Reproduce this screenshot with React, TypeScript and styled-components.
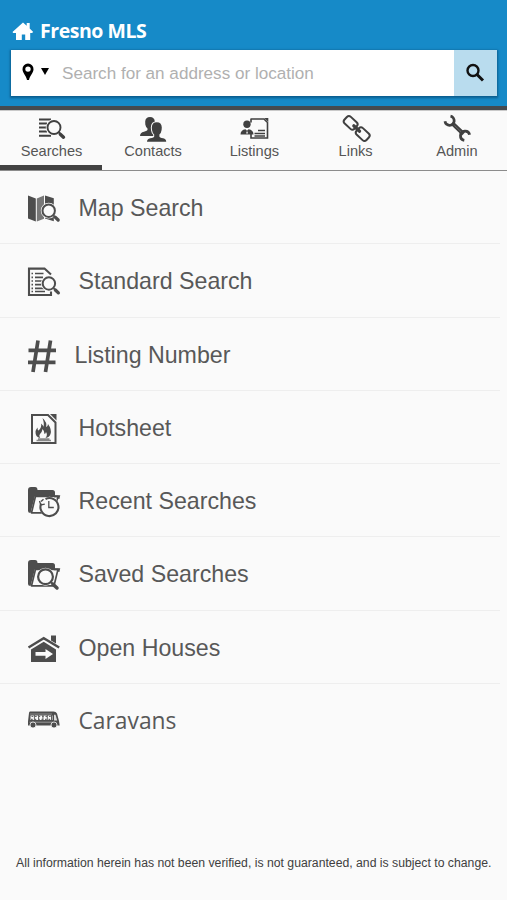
import React from "react";
import styled, { createGlobalStyle } from "styled-components";

const ink = "#4d4d4d";
const paper = "#fafafa";

const GlobalStyle = createGlobalStyle`
  * { box-sizing: border-box; }
  body { margin: 0; background: ${paper}; font-family: "Liberation Sans", Arial, sans-serif; }
  button { font: inherit; border: 0; padding: 0; background: none; color: inherit; }
`;

const Page = styled.div`
  width: 507px;
  height: 900px;
  display: flex;
  flex-direction: column;
  background: ${paper};
  overflow: hidden;
`;

const Header = styled.header`
  height: 110px;
  flex: none;
  background: #168ac8;
  border-bottom: 4px solid #454b50;
  padding: 17px 10px 0 11px;
`;

const Brand = styled.div`
  height: 33px;
  display: flex;
  align-items: center;
  gap: 6px;
  padding: 0 0 6px 1px;
  color: #fff;
`;

const BrandName = styled.h1`
  margin: 0;
  font: 700 19.5px/26px "Open Sans", "Noto Sans", sans-serif;
  letter-spacing: -0.45px;
  white-space: nowrap;
`;

const SearchBar = styled.form`
  height: 46px;
  display: flex;
  background: #fff;
  box-shadow: 0 1px 2px 1px rgba(0, 50, 85, 0.5);
`;

const ScopeButton = styled.button`
  width: 51px;
  display: flex;
  align-items: center;
  gap: 7px;
  padding: 0 0 3px 11px;
`;

const SearchInput = styled.input`
  flex: 1;
  min-width: 0;
  border: 0;
  padding: 1px 0 0;
  outline: 0;
  background: transparent;
  font: 17.1px "Liberation Sans", Arial, sans-serif;
  &::placeholder { color: #b0b0b0; opacity: 1; }
`;

const SubmitButton = styled.button`
  width: 43.5px;
  display: grid;
  place-items: center;
  padding-bottom: 1px;
  && { background: #b9dcee; }
`;

const Tabs = styled.nav`
  height: 61px;
  flex: none;
  display: grid;
  grid-template-columns: 102px repeat(4, 1fr);
  border-top: 1px solid #c9c9c9;
  border-bottom: 1.5px solid #8c8c8c;
`;

const Tab = styled.button<{ $active?: boolean }>`
  display: flex;
  flex-direction: column;
  align-items: center;
  padding: 3px 0 0 1px;
  color: #404040;
  box-shadow: ${(p) => (p.$active ? "inset 0 -5px 0 #424242" : "none")};
`;

const TabLabel = styled.span`
  font-size: 14.6px;
  line-height: 18px;
  margin-top: -2px;
  color: #555;
`;

const Menu = styled.ul`
  list-style: none;
  margin: 0;
  padding: 0 7px 0 0;
`;

const Row = styled.li`
  height: 73.25px;
  display: flex;
  align-items: center;
  padding: 2px 0 0 26px;
  color: ${ink};
  border-bottom: 1px solid #eeeeee;
  &:last-child { border-bottom: 0; }
`;

const RowLabel = styled.span<{ $near?: boolean; $humanist?: boolean }>`
  margin-left: ${(p) => (p.$near ? 10.5 : 14.5)}px;
  font-family: ${(p) => (p.$humanist ? '"Open Sans", "Noto Sans", sans-serif' : "inherit")};
  font-size: ${(p) => (p.$humanist ? 22.8 : 23.2)}px;
  line-height: 28px;
  color: #585858;
  white-space: nowrap;
`;

const Disclaimer = styled.footer`
  margin-top: auto;
  height: 45px;
  padding-left: 16px;
  font-size: 12.24px;
  line-height: 16px;
  color: #404040;
  white-space: nowrap;
`;

const Glyph = styled.svg`
  display: block;
  flex: none;
  fill: currentColor;
`;

type IconProps = { children: React.ReactNode };
const TabIcon = ({ children }: IconProps) => (
  <Glyph width="32" height="30" viewBox="0 0 32 30">{children}</Glyph>
);
const RowIcon = ({ children }: IconProps) => (
  <Glyph width="38" height="36" viewBox="0 0 38 36">{children}</Glyph>
);

const Lens = ({ x, y, r = 6.2 }: { x: number; y: number; r?: number }) => (
  <g>
    <circle cx={x} cy={y} r={r + 1.7} fill={paper} />
    <circle cx={x} cy={y} r={r} fill={paper} stroke="currentColor" strokeWidth="2" />
    <path d={`M${x + r * 0.75} ${y + r * 0.75}l2.200 2.200`} stroke="currentColor" strokeWidth="1.800" />
    <path d={`M${x + r * 0.8 + 1.5} ${y + r * 0.8 + 1.5}l3 2.900`} stroke="currentColor" strokeWidth="3.300" strokeLinecap="round" />
  </g>
);

const Folder = () => (
  <g>
    <path d="M2 28V7q0-3 3-3h4q2.500 0 2.500 3h15q2.500 0 2.500 2.500V13H9L4.500 30Q2 30 2 28z" />
    <path d="M9.500 13.400h22.500L28 29.800H5.500z" fill={paper} stroke="currentColor" strokeWidth="1.700" strokeLinejoin="round" />
    <path d="M28 13.200h5l-.6 2.500" fill="none" stroke="currentColor" strokeWidth="2" />
  </g>
);

const tabs = [
  {
    label: "Searches",
    icon: (
      <TabIcon>
        <path d="M3 5.500h12M3 9.500h8M3 13.500h7M3 17.500h8M3 21.700h12" stroke="currentColor" strokeWidth="2" />
        <circle cx="18" cy="13.500" r="8.200" fill={paper} />
        <circle cx="18" cy="13.500" r="6.500" fill="none" stroke="currentColor" strokeWidth="1.900" />
        <path d="M22.500 18l2 2" stroke="currentColor" strokeWidth="1.900" />
        <path d="M24.300 20.200l3.200 3" stroke="currentColor" strokeWidth="3.400" strokeLinecap="round" />
      </TabIcon>
    ),
  },
  {
    label: "Contacts",
    icon: (
      <TabIcon>
        <path d="M8.200 7.500Q8.500 3 13 3T17.800 7.500l-.2 3q-.4 3-2 4.500v3l3 2v2H3q0-3.500 4-4.300 3.500-.8 3.500-1.700v-1.500Q8.700 13 8.300 10.500z" />
        <path d="M14.800 13.500q.2-5.300 5-5.300t5 5.300l-.2 2.500q-.4 3-2.200 4.500v2q0 1 3.800 1.800 3 .7 3 3.500H10q0-2.800 3.200-3.500 4-.8 4-1.800v-2Q15.400 19 15 16z" stroke={paper} strokeWidth="2" paintOrder="stroke" />
      </TabIcon>
    ),
  },
  {
    label: "Listings",
    icon: (
      <TabIcon>
        <path d="M13 5h13l3.500 3.500V24H13v-4M13 4.500v4" fill="none" stroke="currentColor" strokeWidth="1.600" />
        <path d="M26.300 4h4v4z" />
        <path d="M16.500 19.500H27M20 16.500h7M16.500 22H27" stroke="currentColor" strokeWidth="1.500" />
        <circle cx="9" cy="10.300" r="3.700" />
        <path d="M2.500 20.500q0-4.500 5-5.200l1.500 1.500 1.500-1.500q5 .7 5 5.200z" />
        <path d="M8.600 17.400h.9l.4 2.200H8.200z" fill={paper} />
      </TabIcon>
    ),
  },
  {
    label: "Links",
    icon: (
      <TabIcon>
        <g transform="translate(16.700 14.500) rotate(43)" fill="none" stroke="currentColor" strokeWidth="2">
          <rect x="-15" y="-4.500" width="13.500" height="9" rx="2.800" />
          <rect x="1.500" y="-4.500" width="13.500" height="9" rx="2.800" />
          <path d="M-4 0h8" strokeWidth="3.200" strokeLinecap="round" />
        </g>
      </TabIcon>
    ),
  },
  {
    label: "Admin",
    icon: (
      <TabIcon>
        <g fill="none" stroke="currentColor">
          <path d="M4 7.300A4.600 4.600 0 1 0 9.500 2.200M23.300 26.300A4.600 4.600 0 1 1 28.600 20.800" strokeWidth="2.800" />
          <path d="M11 9l11.500 11" strokeWidth="4.200" />
        </g>
        <path d="M13.500 11.500l6.500 6.200" stroke="#777" strokeWidth=".7" />
      </TabIcon>
    ),
  },
];

const items: { label: string; icon: React.ReactNode; near?: boolean; humanist?: boolean }[] = [
  {
    label: "Map Search",
    icon: (
      <RowIcon>
        <path d="M2 5.500l7.800 3v23L2 28.500z" />
        <path d="M10.800 8.500l7.200-3v23.300l-7.200 2.700z" fill="#777" />
        <path d="M19 5.500l8.800 2.700v23L19 28.500z" />
        <Lens x={22.700} y={20.700} />
      </RowIcon>
    ),
  },
  {
    label: "Standard Search",
    icon: (
      <RowIcon>
        <path d="M25 28.500V32H3V5.600h15.500l6.500 6" fill="none" stroke="currentColor" strokeWidth="2.100" />
        <path d="M9 10.500h8.500M9 14.300h8M9 18h7M9 21.700h7M9 25.400h9M9 28.500h10" stroke="currentColor" strokeWidth="1.700" />
        <path d="M5.500 10.500H7M5.500 14.300H7M5.500 18H7M5.500 21.700H7M5.500 25.400H7M5.500 28.500H7" stroke="currentColor" strokeWidth="1.700" />
        <Lens x={22.900} y={20.500} />
      </RowIcon>
    ),
  },
  {
    label: "Listing Number",
    near: true,
    icon: (
      <RowIcon>
        <path d="M12 3.500L7 35M24.500 3.500l-5 31.500M2.500 13.400h27.500M2 25.300h27.500" fill="none" stroke="currentColor" strokeWidth="3.700" />
      </RowIcon>
    ),
  },
  {
    label: "Hotsheet",
    icon: (
      <RowIcon>
        <path d="M6 5h16l7.500 7.500V33H6z" fill="none" stroke="currentColor" strokeWidth="2" />
        <path d="M24 4h6.500v6.500z" />
        <path d="M16.500 8q5 4.500 3.500 9 2-.5 2-3 4 5.500 2.500 10-1 3.500-5 4 2.500-3 .5-6-.5 2-1.500 2 0-3-2-5-.5 3.500-2.500 5-1.500 1.500.2 4-5-1-4.700-6.500.5-2 2-4 0 2.500 1 3 3.500-3 2.500-7 2.500 2 2.500 4 1-4-1-9.500z" />
        <path d="M10.500 30.500h14.500M12 29l11.500 0" stroke="#888" strokeWidth="1.500" />
      </RowIcon>
    ),
  },
  {
    label: "Recent Searches",
    icon: (
      <RowIcon>
        <Folder />
        <circle cx="23.500" cy="24" r="10.200" fill={paper} />
        <path d="M15.200 20.500a9 9 0 1 0 4.300-4.500" fill="none" stroke="currentColor" strokeWidth="2.100" />
        <path d="M13.500 18l1.300 4 4-.8M22.800 18v6.500h5" fill="none" stroke="currentColor" strokeWidth="1.300" />
        <path d="M15 18.500l2.500-2.200" stroke="currentColor" strokeWidth="1.500" />
      </RowIcon>
    ),
  },
  {
    label: "Saved Searches",
    icon: (
      <RowIcon>
        <Folder />
        <circle cx="19.500" cy="20.700" r="9" fill={paper} />
        <circle cx="19.500" cy="20.700" r="7.400" fill="none" stroke="currentColor" strokeWidth="2.200" />
        <path d="M25 26.200l2 2" stroke="currentColor" strokeWidth="2" />
        <path d="M27 28.200l4 3.800" stroke="currentColor" strokeWidth="3.500" strokeLinecap="round" />
      </RowIcon>
    ),
  },
  {
    label: "Open Houses",
    icon: (
      <RowIcon>
        <path d="M2.500 17.500L17.700 8.200 33.200 17.500" fill="none" stroke="currentColor" strokeWidth="2.400" />
        <path d="M25 5.500h5v8l-5-3z" />
        <path d="M5 19.500l12.700-7.700L30 19.500V32H5z" />
        <path d="M9.500 22h10v-3l7.500 5-7.500 5v-3.200h-10z" fill={paper} />
      </RowIcon>
    ),
  },
  {
    label: "Caravans",
    humanist: true,
    icon: (
      <RowIcon>
        <path d="M4 8.500h23.500q2.500 0 3.500 2l2 7.500.7 4.500H2V18.500l1-8.500q.1-1.500 1-1.500z" />
        <path d="M4 11h22" stroke="#999" strokeWidth=".8" />
        <path d="M4.500 14.700h22" stroke={paper} strokeWidth="4.600" strokeDasharray="3.400 .9" />
        <path d="M5.500 13.500h20M5 16.300h21" stroke="#666" strokeWidth="1.200" strokeDasharray="1.700 1.800" />
        <path d="M3.500 19.200h24" stroke="#aaa" strokeWidth=".8" />
        <path d="M28 11.700h1.500l1.700 5.800H28z" fill="#ddd" />
        <g stroke={paper} strokeWidth=".8">
          <circle cx="7" cy="22" r="3" />
          <circle cx="28" cy="22" r="3" />
        </g>
      </RowIcon>
    ),
  },
];

export default function App() {
  return (
    <Page>
      <GlobalStyle />
      <Header>
        <Brand>
          <Glyph width="22" height="20" viewBox="0 0 22 20">
            <path d="M.5 11L11 1.500l3.700 3.300V2h3v5.500l3.500 3.500-1.200 1h-1.800v7h-5v-5.500H9.800V19H4v-7H1.200z" />
          </Glyph>
          <BrandName>Fresno MLS</BrandName>
        </Brand>
        <SearchBar onSubmit={(e) => e.preventDefault()}>
          <ScopeButton type="button" aria-label="Search by location">
            <Glyph width="12" height="18" viewBox="0 0 12 18" fill="#000">
              <path fillRule="evenodd" d="M6 .5a5.500 5.500 0 0 0-5.500 5.700C.5 10 4 12 5 17h2C8 12 11.500 10 11.500 6.200A5.500 5.500 0 0 0 6 .5zm0 2.900a2.700 2.700 0 1 1 0 5.400 2.700 2.700 0 0 1 0-5.400z" />
            </Glyph>
            <Glyph width="8" height="7" viewBox="0 0 8 7"><path d="M0 0h8L4 7z" /></Glyph>
          </ScopeButton>
          <SearchInput placeholder="Search for an address or location" />
          <SubmitButton aria-label="Search">
            <Glyph width="20" height="20" viewBox="0 0 20 20">
              <circle cx="8" cy="7.500" r="5.500" fill="none" stroke="#111" strokeWidth="2.400" />
              <path d="M12 11.500l6 6" stroke="#111" strokeWidth="3" />
            </Glyph>
          </SubmitButton>
        </SearchBar>
      </Header>
      <Tabs>
        {tabs.map((t, i) => (
          <Tab key={t.label} $active={i === 0}>
            {t.icon}
            <TabLabel>{t.label}</TabLabel>
          </Tab>
        ))}
      </Tabs>
      <Menu>
        {items.map((m) => (
          <Row key={m.label}>
            {m.icon}
            <RowLabel $near={m.near} $humanist={m.humanist}>{m.label}</RowLabel>
          </Row>
        ))}
      </Menu>
      <Disclaimer>
        All information herein has not been verified, is not guaranteed, and is subject to change.
      </Disclaimer>
    </Page>
  );
}
